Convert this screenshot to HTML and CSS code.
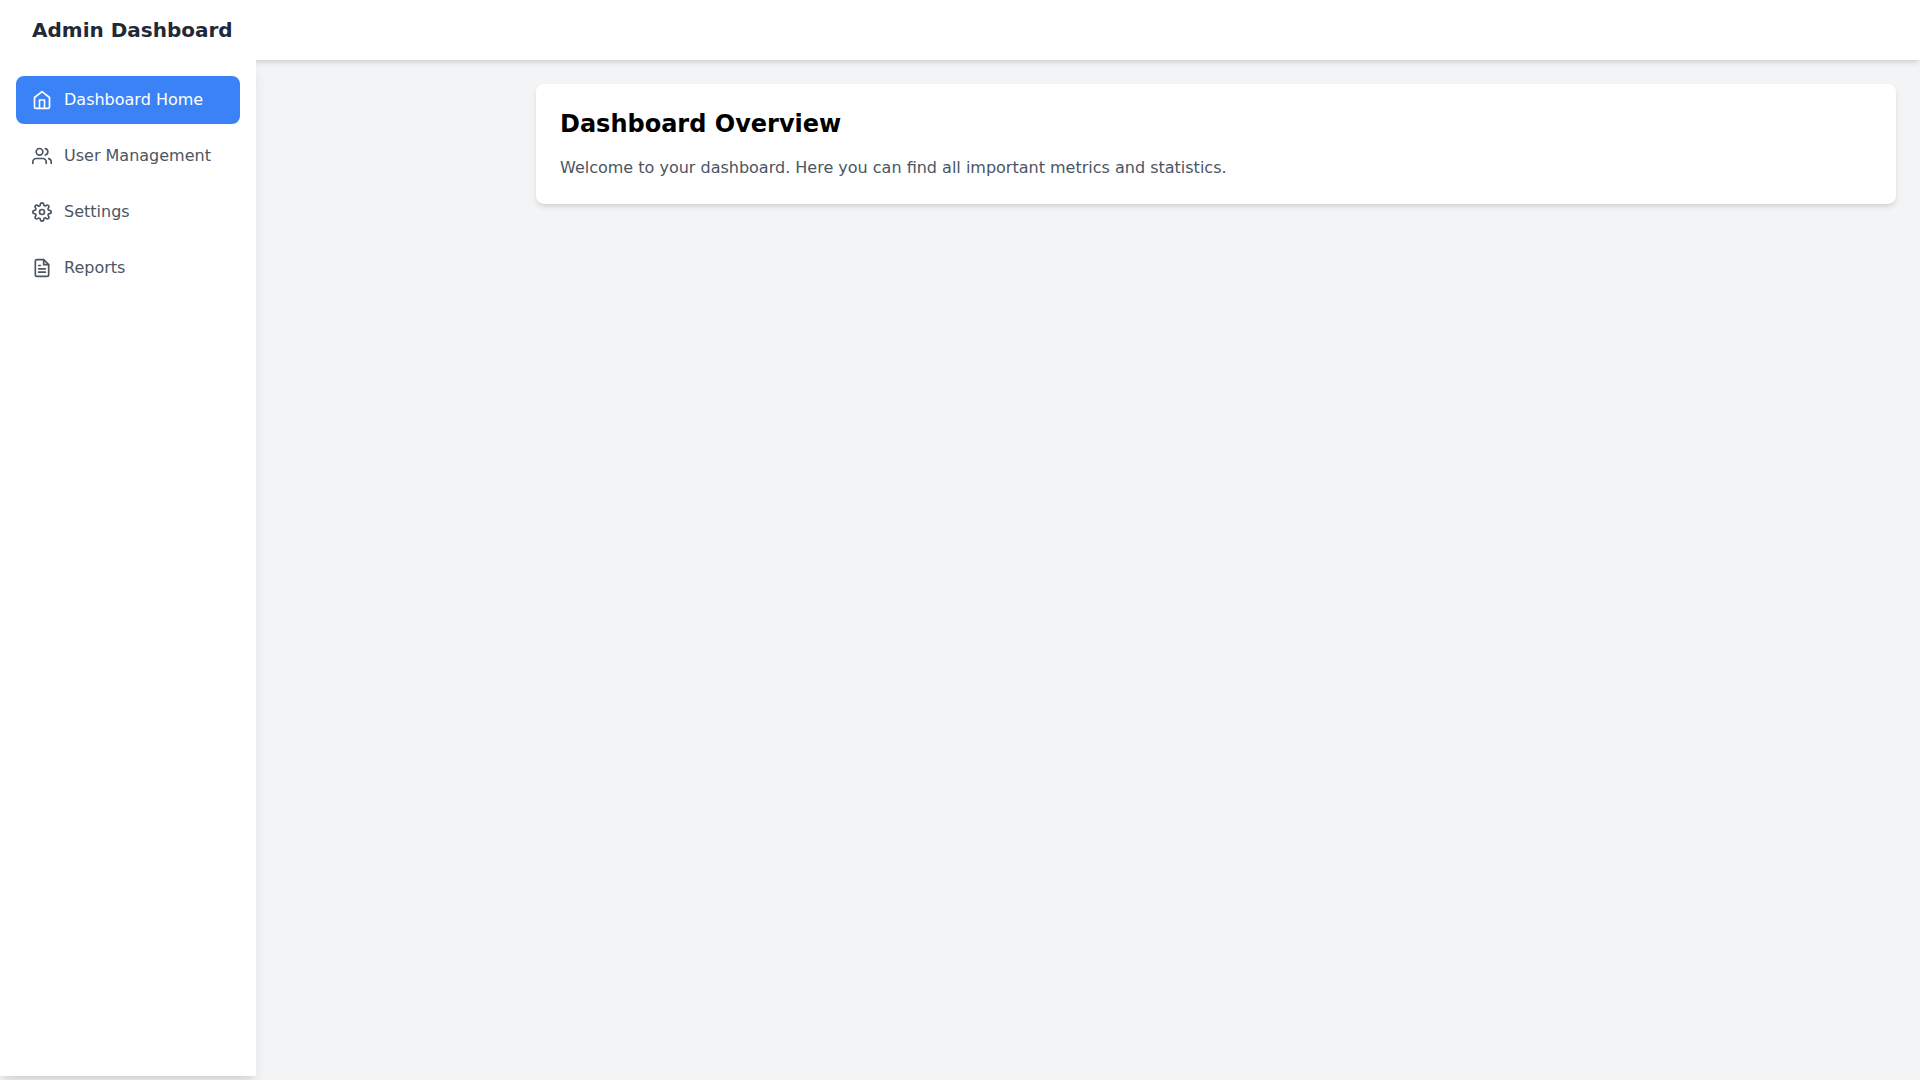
FILE: index.html
```html
<!DOCTYPE html>
<html lang="en">
<head>
  <meta charset="utf-8">
  <meta name="viewport" content="width=device-width, initial-scale=1">
  <title>Admin Dashboard</title>
  <link rel="stylesheet" href="styles.css">
</head>
<body>
  <header class="header">
    <h1 class="brand">Admin Dashboard</h1>
  </header>
  <div class="layout">
    <aside class="sidebar">
      <nav class="nav">
        <a class="nav-link active" href="#home" aria-current="page">
          <svg class="icon" viewBox="0 0 24 24" aria-hidden="true"><path d="M3 9l9-7 9 7v11a2 2 0 0 1-2 2H5a2 2 0 0 1-2-2z"/><polyline points="9 22 9 12 15 12 15 22"/></svg>
          <span>Dashboard Home</span>
        </a>
        <a class="nav-link" href="#users">
          <svg class="icon" viewBox="0 0 24 24" aria-hidden="true"><path d="M17 21v-2a4 4 0 0 0-4-4H5a4 4 0 0 0-4 4v2"/><circle cx="9" cy="7" r="4"/><path d="M23 21v-2a4 4 0 0 0-3-3.87"/><path d="M16 3.13a4 4 0 0 1 0 7.75"/></svg>
          <span>User Management</span>
        </a>
        <a class="nav-link" href="#settings">
          <svg class="icon" viewBox="0 0 24 24" aria-hidden="true"><circle cx="12" cy="12" r="3"/><path d="M19.4 15a1.65 1.65 0 0 0 .33 1.82l.06.06a2 2 0 0 1 0 2.83 2 2 0 0 1-2.83 0l-.06-.06a1.65 1.65 0 0 0-1.82-.33 1.65 1.65 0 0 0-1 1.51V21a2 2 0 0 1-2 2 2 2 0 0 1-2-2v-.09A1.65 1.65 0 0 0 9 19.4a1.65 1.65 0 0 0-1.82.33l-.06.06a2 2 0 0 1-2.83 0 2 2 0 0 1 0-2.83l.06-.06a1.65 1.65 0 0 0 .33-1.82 1.65 1.65 0 0 0-1.51-1H3a2 2 0 0 1-2-2 2 2 0 0 1 2-2h.09A1.65 1.65 0 0 0 4.6 9a1.65 1.65 0 0 0-.33-1.82l-.06-.06a2 2 0 0 1 0-2.83 2 2 0 0 1 2.83 0l.06.06a1.65 1.65 0 0 0 1.82.33H9a1.65 1.65 0 0 0 1-1.51V3a2 2 0 0 1 2-2 2 2 0 0 1 2 2v.09a1.65 1.65 0 0 0 1 1.51 1.65 1.65 0 0 0 1.82-.33l.06-.06a2 2 0 0 1 2.83 0 2 2 0 0 1 0 2.83l-.06.06a1.65 1.65 0 0 0-.33 1.82V9a1.65 1.65 0 0 0 1.51 1H21a2 2 0 0 1 2 2 2 2 0 0 1-2 2h-.09a1.65 1.65 0 0 0-1.51 1z"/></svg>
          <span>Settings</span>
        </a>
        <a class="nav-link" href="#reports">
          <svg class="icon" viewBox="0 0 24 24" aria-hidden="true"><path d="M14 2H6a2 2 0 0 0-2 2v16a2 2 0 0 0 2 2h12a2 2 0 0 0 2-2V8z"/><polyline points="14 2 14 8 20 8"/><line x1="16" y1="13" x2="8" y2="13"/><line x1="16" y1="17" x2="8" y2="17"/><polyline points="10 9 9 9 8 9"/></svg>
          <span>Reports</span>
        </a>
      </nav>
    </aside>
    <main class="main">
      <section class="card">
        <h2 class="card-title">Dashboard Overview</h2>
        <p class="card-text">Welcome to your dashboard. Here you can find all important metrics and statistics.</p>
      </section>
    </main>
  </div>
</body>
</html>
```

FILE: styles.css
```css
:root {
  --sidebar-width: 256px;
  --shadow-md: 0 4px 6px -1px rgba(0, 0, 0, 0.1), 0 2px 4px -2px rgba(0, 0, 0, 0.1);
  --shadow-lg: 0 10px 15px -3px rgba(0, 0, 0, 0.1), 0 4px 6px -4px rgba(0, 0, 0, 0.1);
}

* {
  box-sizing: border-box;
  margin: 0;
}

body {
  min-height: 100vh;
  background: #f3f4f6;
  color: #000;
  font: 16px/24px "DejaVu Sans", sans-serif;
}

.header {
  padding: 16px 32px;
  background: #fff;
  box-shadow: var(--shadow-md);
}

.brand {
  color: #1f2937;
  font-size: 20px;
  line-height: 28px;
}

.layout {
  display: flex;
}

.sidebar {
  flex: none;
  width: var(--sidebar-width);
  height: calc(100vh - 64px);
  padding: 16px;
  background: #fff;
  box-shadow: var(--shadow-lg);
}

.nav {
  display: flex;
  flex-direction: column;
  gap: 8px;
}

.nav-link {
  display: flex;
  align-items: center;
  gap: 12px;
  padding: 12px 16px;
  border-radius: 8px;
  color: #4b5563;
  text-decoration: none;
}

.nav-link.active {
  background: #3b82f6;
  color: #fff;
}

.icon {
  flex: none;
  width: 20px;
  height: 20px;
  fill: none;
  stroke: currentColor;
  stroke-width: 2;
  stroke-linecap: round;
  stroke-linejoin: round;
}

.main {
  flex: 1;
  min-width: 0;
  margin-left: var(--sidebar-width);
  padding: 24px;
}

.card {
  padding: 24px;
  border-radius: 8px;
  background: #fff;
  box-shadow: var(--shadow-md);
}

.card-title {
  margin-bottom: 16px;
  font-size: 24px;
  line-height: 32px;
}

.card-text {
  color: #4b5563;
}
```
